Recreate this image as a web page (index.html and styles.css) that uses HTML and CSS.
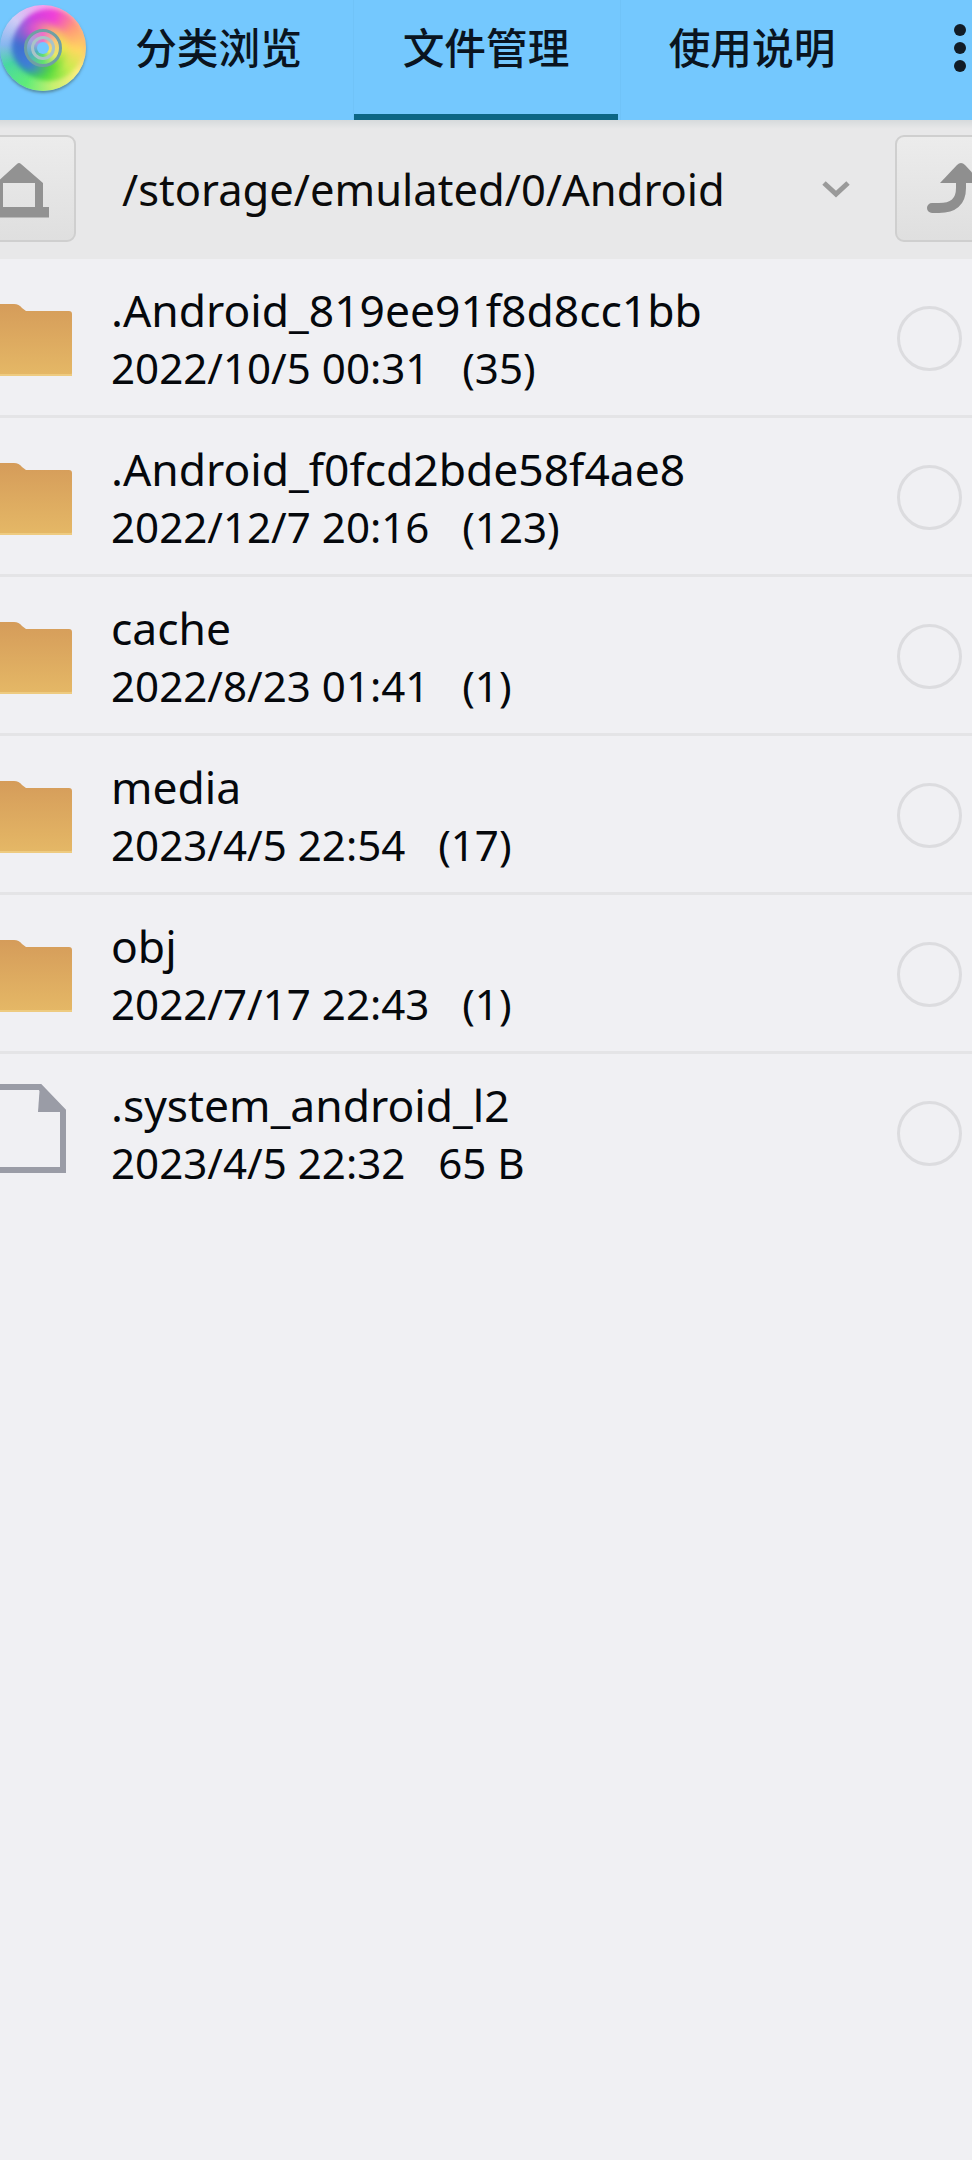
FILE: index.html
```
<!DOCTYPE html>
<html lang="zh">
<head>
<meta charset="utf-8">
<title>文件管理</title>
<link rel="stylesheet" href="styles.css">
</head>
<body>
<header class="top">
  <div class="logo"><div class="swirl"></div><div class="swirl2"></div><div class="ring"><div class="ring2"><div class="hole"></div></div></div></div>
  <nav class="tabs">
    <div class="tab first">分类浏览</div>
    <div class="tab active">文件管理</div>
    <div class="tab third">使用说明</div>
  </nav>
  <div class="more"><i></i><i></i><i></i></div>
</header>
<section class="bar">
  <div class="btn home">
    <svg class="glyph" width="62" height="62" viewBox="0 0 62 62"><path class="ico" fill-rule="evenodd" d="M-6 59.5V25L15 6Q17 4 19 6L41 25V49H47V59.5ZM1 25V49H33V25Z"/></svg>
  </div>
  <div class="path">/storage/emulated/0/Android</div>
  <svg class="chev" width="28" height="18" viewBox="0 0 28 18"><path d="M2 3l12 11L26 3" fill="none" stroke="#9a9a9a" stroke-width="5"/></svg>
  <div class="btn up">
    <svg class="glyph" width="60" height="62" viewBox="0 0 60 62"><path d="M7 50H14C28 50 36 44 36 30V18" fill="none" stroke="#8f8f8f" stroke-width="10" stroke-linecap="round"/><path d="M15 25L32 7Q36 3 40 7L57 25Z" fill="#8f8f8f"/></svg>
  </div>
</section>
<main class="list">
  <div class="row">
    <svg class="icon" width="76" height="76" viewBox="0 0 76 76"><use href="#folder"/></svg>
    <div class="text"><div class="name">.Android_819ee91f8d8cc1bb</div><div class="meta">2022/10/5 00:31&nbsp;&nbsp;&nbsp;(35)</div></div>
    <div class="radio"></div>
  </div>
  <div class="row">
    <svg class="icon" width="76" height="76" viewBox="0 0 76 76"><use href="#folder"/></svg>
    <div class="text"><div class="name">.Android_f0fcd2bde58f4ae8</div><div class="meta">2022/12/7 20:16&nbsp;&nbsp;&nbsp;(123)</div></div>
    <div class="radio"></div>
  </div>
  <div class="row">
    <svg class="icon" width="76" height="76" viewBox="0 0 76 76"><use href="#folder"/></svg>
    <div class="text"><div class="name">cache</div><div class="meta">2022/8/23 01:41&nbsp;&nbsp;&nbsp;(1)</div></div>
    <div class="radio"></div>
  </div>
  <div class="row">
    <svg class="icon" width="76" height="76" viewBox="0 0 76 76"><use href="#folder"/></svg>
    <div class="text"><div class="name">media</div><div class="meta">2023/4/5 22:54&nbsp;&nbsp;&nbsp;(17)</div></div>
    <div class="radio"></div>
  </div>
  <div class="row">
    <svg class="icon" width="76" height="76" viewBox="0 0 76 76"><use href="#folder"/></svg>
    <div class="text"><div class="name">obj</div><div class="meta">2022/7/17 22:43&nbsp;&nbsp;&nbsp;(1)</div></div>
    <div class="radio"></div>
  </div>
  <div class="row last">
    <svg class="icon file" width="76" height="89" viewBox="0 0 76 89"><path d="M-8 3H40L63 27V86H-8Z" fill="none" stroke="#9a9ca6" stroke-width="6"/><path d="M40 0L66 28H38Z" fill="#9a9ca6"/></svg>
    <div class="text"><div class="name">.system_android_l2</div><div class="meta">2023/4/5 22:32&nbsp;&nbsp;&nbsp;65 B</div></div>
    <div class="radio"></div>
  </div>
</main>
<svg class="defs" width="0" height="0">
  <defs>
    <linearGradient id="fg" x1="0" y1="0" x2="0" y2="1"><stop offset="0" stop-color="#d59c5a"/><stop offset="1" stop-color="#e5b866"/></linearGradient>
    <g id="folder"><path d="M-8 2H14Q19 2 22 6L26 9H69Q72 9 72 12V71Q72 74 69 74H-8Z" fill="url(#fg)"/><path d="M-8 72H72V74H-8Z" fill="#eecb80"/></g>
  </defs>
</svg>
</body>
</html>
```

FILE: styles.css
```
* { box-sizing: border-box; }
html, body { margin: 0; padding: 0; }
body {
  width: 972px;
  height: 2160px;
  overflow: hidden;
  background: #f0f0f3;
  color: #0b0f14;
  font-family: "Noto Sans", "Noto Sans CJK SC", sans-serif;
}
.top {
  height: 120px;
  background: #74c8fe;
  display: flex;
  position: relative;
}
.logo {
  flex: none;
  width: 86px;
  height: 86px;
  margin: 5px 2px 0 0;
  border-radius: 50%;
  position: relative;
  display: flex;
  align-items: center;
  justify-content: center;
  overflow: hidden;
  background: conic-gradient(from 0deg, #f6a0ee 0deg, #fbb0a0 50deg, #fdc070 85deg, #fdee80 125deg, #c8f070 165deg, #60ec78 205deg, #48d8a0 245deg, #88b8f0 275deg, #d0ccf6 315deg, #f6a0ee 360deg);
  box-shadow: 0 2px 3px rgba(60, 90, 90, .55);
}
.swirl {
  position: absolute;
  left: 14px;
  top: 4px;
  width: 70px;
  height: 72px;
  border-radius: 50%;
  filter: blur(2px);
  background: conic-gradient(from -30deg, #d040e0 0deg, #f040d8 40deg, #ff9a78 85deg, #ffd860 130deg, #c8ec50 170deg, #58e040 215deg, #20c080 260deg, #3f8fe0 300deg, #d040e0 360deg);
}
.swirl2 {
  position: absolute;
  left: 12px;
  top: 17px;
  width: 56px;
  height: 52px;
  border-radius: 50%;
  filter: blur(3px);
  background: conic-gradient(from 210deg, #3f7fd8 0deg, #3f6fd0 70deg, #e050d0 130deg, #fcb070 190deg, #f0e850 240deg, #50d838 300deg, #3f7fd8 360deg);
}
.ring {
  position: relative;
  width: 38px;
  height: 38px;
  border-radius: 50%;
  border: 3px solid #6f9fa4;
  background: conic-gradient(#f070c8, #f8c878, #e8e868, #60e070, #50b0c0, #a0a0e0, #f070c8);
  display: flex;
  align-items: center;
  justify-content: center;
}
.ring2 {
  width: 24px;
  height: 24px;
  border-radius: 50%;
  border: 3px solid #a9c4c8;
  display: flex;
  align-items: center;
  justify-content: center;
}
.hole {
  width: 12px;
  height: 12px;
  border-radius: 50%;
  background: #74c8fe;
}
.tabs { display: flex; }
.tab {
  width: 266px;
  height: 120px;
  padding-bottom: 28px;
  display: flex;
  align-items: center;
  justify-content: center;
  font-size: 41.7px;
  font-weight: 500;
  font-family: "Noto Sans CJK SC", sans-serif;
  color: #0a1420;
  position: relative;
}
.tab.first { padding-right: 4px; border-right: 1px solid #70c3f8; }
.tab.active { width: 264px; box-shadow: inset 0 -6px 0 #0c6685; }
.tab.third { margin-left: 2px; padding-right: 3px; border-left: 1px solid #70c3f8; }
.more {
  flex: none;
  margin: 24px 0 0 68px;
  display: flex;
  flex-direction: column;
  gap: 6px;
}
.more i {
  display: block;
  width: 12px;
  height: 12px;
  border-radius: 50%;
  background: #111c26;
}
.bar {
  height: 139px;
  background: linear-gradient(#d6dadc 0, #e8e8e9 9px);
  display: flex;
  align-items: flex-start;
  position: relative;
}
.btn {
  flex: none;
  height: 107px;
  margin-top: 15px;
  background: linear-gradient(#ececec, #dfdfdf);
  border: 2px solid #cfcfcf;
  border-radius: 9px;
  display: flex;
  align-items: center;
}
.glyph { flex: none; overflow: visible; }
.home {
  width: 86px;
  margin-left: -10px;
  padding-left: 10px;
}
.ico { fill: #929292; }
.path {
  margin: 0 0 0 46px;
  flex: none;
  height: 139px;
  line-height: 139px;
  font-size: 43.5px;
  font-weight: 400;
  color: #0b0b0b;
  white-space: nowrap;
  width: 640px;
}
.chev { flex: none; position: absolute; left: 822px; top: 60px; }
.up {
  position: absolute;
  left: 895px;
  top: 0;
  width: 90px;
  padding-left: 28px;
}
.list { display: block; }
.row {
  height: 159px;
  border-bottom: 3px solid #e4e4e6;
  display: flex;
  align-items: center;
  position: relative;
}
.row.last { border-bottom-color: transparent; }
.icon { flex: none; overflow: visible; display: block; }
.row .icon { margin: 5px 35px 0 0; }
.row .icon.file { margin: 0 35px 7px 0; }
.text { flex: 1; min-width: 0; padding-top: 3px; }
.name {
  font-size: 44.4px;
  line-height: 58px;
  font-weight: 400;
  white-space: nowrap;
  color: #05080c;
}
.meta {
  font-size: 42.1px;
  line-height: 58px;
  font-weight: 400;
  white-space: nowrap;
  color: #05080c;
}
.radio {
  flex: none;
  width: 65px;
  height: 65px;
  margin: 2px 10px 0 0;
  border-radius: 50%;
  border: 3px solid #dcdcdf;
}
.defs { position: absolute; }
```
